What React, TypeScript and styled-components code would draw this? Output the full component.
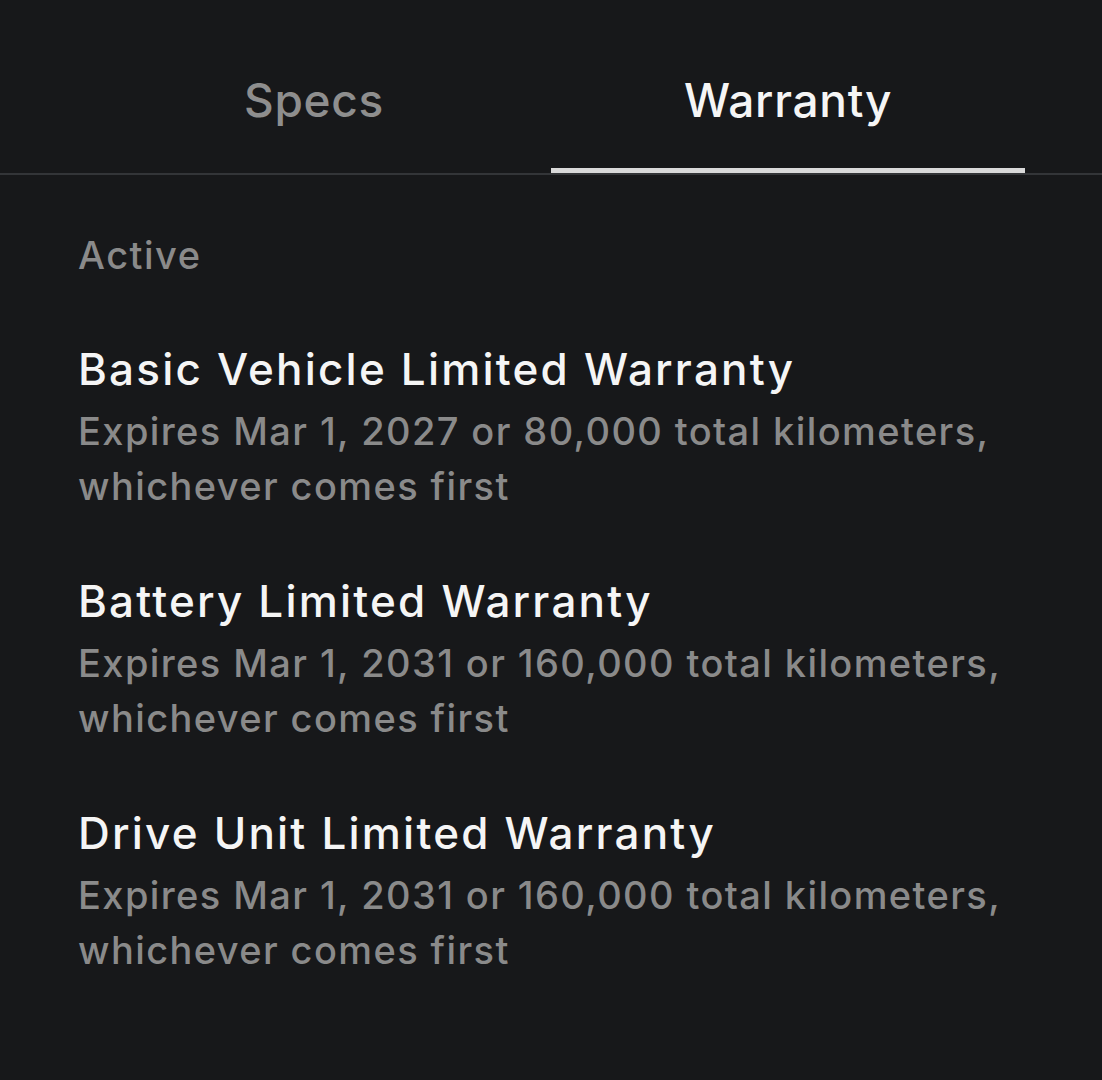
import styled, { createGlobalStyle } from "styled-components";

const warranties = [
  {
    title: "Basic Vehicle Limited Warranty",
    detail: "Expires Mar 1, 2027 or 80,000 total kilometers, whichever comes first",
  },
  {
    title: "Battery Limited Warranty",
    detail: "Expires Mar 1, 2031 or 160,000 total kilometers, whichever comes first",
  },
  {
    title: "Drive Unit Limited Warranty",
    detail: "Expires Mar 1, 2031 or 160,000 total kilometers, whichever comes first",
  },
];

export default function App() {
  return (
    <>
      <GlobalStyle />
      <Page>
        <TabBar>
          <Tab>Specs</Tab>
          <Tab $active>Warranty</Tab>
        </TabBar>
        <Content>
          <SectionLabel>Active</SectionLabel>
          <List>
            {warranties.map((item) => (
              <Item key={item.title}>
                <Title>{item.title}</Title>
                <Detail>{item.detail}</Detail>
              </Item>
            ))}
          </List>
        </Content>
      </Page>
    </>
  );
}

const GlobalStyle = createGlobalStyle`
  html, body {
    margin: 0;
    padding: 0;
    background: #17181a;
  }
  body {
    font-family: Inter, "Noto Sans", sans-serif;
    -webkit-font-smoothing: antialiased;
  }
`;

const Page = styled.div`
  width: 1102px;
  min-height: 1080px;
  background: #17181a;
`;

const TabBar = styled.div`
  display: grid;
  grid-template-columns: 1fr 1fr;
  padding: 0 77px;
  border-bottom: 2px solid #333538;
`;

const Tab = styled.div<{ $active?: boolean }>`
  box-sizing: border-box;
  height: 173px;
  padding-top: 72px;
  text-align: center;
  font-size: 46px;
  line-height: 56px;
  font-weight: 500;
  letter-spacing: 0.7px;
  color: ${(p) => (p.$active ? "#f5f5f5" : "#8e8e8e")};
  border-bottom: 5px solid ${(p) => (p.$active ? "#d9d9d9" : "transparent")};
`;

const Content = styled.div`
  padding: 57px 77px 0 78px;
`;

const SectionLabel = styled.div`
  font-size: 38px;
  line-height: 46px;
  font-weight: 500;
  letter-spacing: 1.5px;
  color: #8a8a8a;
`;

const List = styled.div`
  display: flex;
  flex-direction: column;
  gap: 60px;
  margin-top: 64px;
`;

const Item = styled.div`
  display: flex;
  flex-direction: column;
  gap: 8px;
`;

const Title = styled.div`
  font-size: 44px;
  line-height: 54px;
  font-weight: 500;
  letter-spacing: 2.2px;
  color: #f5f5f5;
`;

const Detail = styled.div`
  font-size: 38px;
  line-height: 55px;
  font-weight: 500;
  letter-spacing: 1.4px;
  color: #8a8a8a;
`;
